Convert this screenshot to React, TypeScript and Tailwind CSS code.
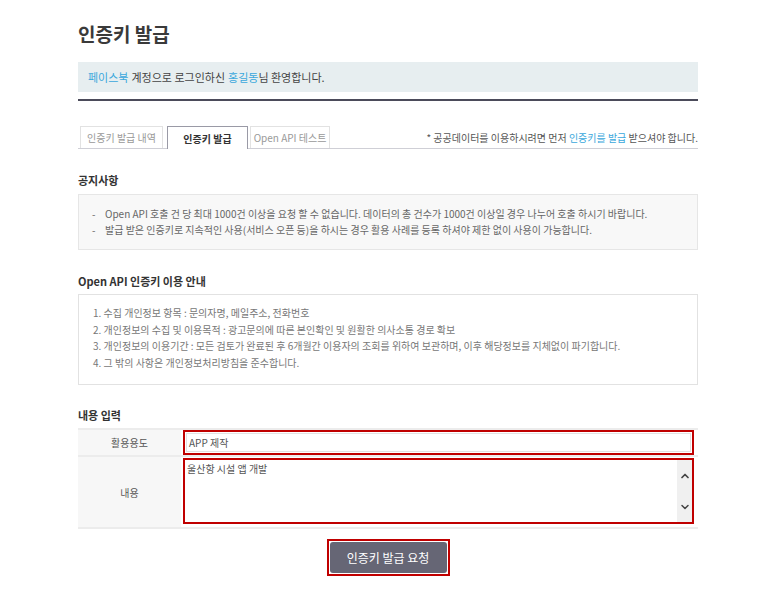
import { ChevronUp, ChevronDown } from 'lucide-react';

const font = { fontFamily: '"Noto Sans CJK KR", "Noto Sans", sans-serif' };

const notices = [
  'Open API 호출 건 당 최대 1000건 이상을 요청 할 수 없습니다. 데이터의 총 건수가 1000건 이상일 경우 나누어 호출 하시기 바랍니다.',
  '발급 받은 인증키로 지속적인 사용(서비스 오픈 등)을 하시는 경우 활용 사례를 등록 하셔야 제한 없이 사용이 가능합니다.',
];

const guides = [
  '1. 수집 개인정보 항목 : 문의자명, 메일주소, 전화번호',
  '2. 개인정보의 수집 및 이용목적 : 광고문의에 따른 본인확인 및 원활한 의사소통 경로 확보',
  '3. 개인정보의 이용기간 : 모든 검토가 완료된 후 6개월간 이용자의 조회를 위하여 보관하며, 이후 해당정보를 지체없이 파기합니다.',
  '4. 그 밖의 사항은 개인정보처리방침을 준수합니다.',
];

const App = () => {
  return (
    <div className="w-[780px] h-[600px] bg-white" style={font}>
      <div className="ml-[78px] w-[620px] pt-[20px]">
        <h1 className="text-[19px] leading-[28px] font-bold text-[#3a3a3a]">인증키 발급</h1>

        <div className="mt-[14px] h-[30px] bg-[#e7eef0] px-[10px] flex items-center text-[11px] text-[#444]">
          <span className="text-[#3aa8dc]">페이스북</span>
          <span className="ml-[3px]">계정으로 로그인하신</span>
          <span className="ml-[3px] text-[#3aa8dc]">홍길동</span>
          <span>님 환영합니다.</span>
        </div>
        <div className="mt-[7px] h-[2px] bg-[#4b4b5a]" />

        {/* tabs */}
        <div className="mt-[25px] flex items-end border-b border-[#cfcfd6] h-[23px]">
          <div className="ml-[2px] h-[22px] w-[83px] border border-b-0 border-[#e2e2e2] flex items-center justify-center text-[10px] text-[#999]">
            인증키 발급 내역
          </div>
          <div className="ml-[4px] h-[23px] w-[81px] border border-b-0 border-[#9a9aa6] bg-white -mb-px flex items-center justify-center text-[10px] font-bold text-[#333]">
            인증키 발급
          </div>
          <div className="ml-[2px] h-[22px] w-[80px] border border-b-0 border-[#e2e2e2] flex items-center justify-center text-[10px] text-[#999]">
            Open API 테스트
          </div>
          <div className="ml-auto self-center text-[10px] text-[#555]">
            * 공공데이터를 이용하시려면 먼저 <span className="text-[#3aa8dc]">인증키를 발급</span> 받으셔야 합니다.
          </div>
        </div>

        <h2 className="mt-[23px] text-[11px] leading-[16px] font-bold text-[#333]">공지사항</h2>
        <div className="mt-[6px] h-[56px] bg-[#f8f8f8] border border-[#e6e6e6] pl-[13px] pt-[11px] text-[10px] leading-[16px] text-[#666]">
          {notices.map(n => (
            <div key={n} className="flex">
              <span className="w-[13px]">-</span>
              <span>{n}</span>
            </div>
          ))}
        </div>

        <h2 className="mt-[23px] text-[11px] leading-[16px] font-bold text-[#333]">Open API 인증키 이용 안내</h2>
        <div className="mt-[5px] h-[91px] bg-white border border-[#e2e2e2] pl-[14px] pt-[10px] text-[10px] leading-[16.5px] text-[#777]">
          {guides.map(g => (
            <div key={g}>{g}</div>
          ))}
        </div>

        <h2 className="mt-[22px] text-[11px] leading-[16px] font-bold text-[#333]">내용 입력</h2>
        <div className="mt-[5px] border-t-2 border-b-2 border-[#ececec]">
          <div className="flex h-[27px] border-b-2 border-[#ececec]">
            <div className="w-[103px] bg-[#f7f7f7] flex items-center justify-center text-[10px] text-[#555]">활용용도</div>
            <div className="flex-1 bg-white pl-[2px] pr-[4px]">
              <div className="w-full h-[25px] border-2 border-[#c00000] p-px">
                <div className="h-full border border-[#e2e2e2] px-[2px] flex items-center text-[10px] text-[#555]">APP 제작</div>
              </div>
            </div>
          </div>
          <div className="flex h-[70px]">
            <div className="w-[103px] bg-[#f7f7f7] flex items-center justify-center text-[10px] text-[#555]">내용</div>
            <div className="flex-1 bg-white pl-[2px] pr-[4px] pt-[1px]">
              <div className="w-full h-[66px] border-2 border-[#c00000] flex">
                <div className="flex-1 p-[2px] text-[10px] leading-[14px] text-[#555]">울산항 시설 앱 개발</div>
                <div className="w-[15px] bg-[#f0f0f0] flex flex-col items-center justify-between pt-[10px] pb-[9px] text-[#444]">
                  <ChevronUp size={12} strokeWidth={3.5} />
                  <ChevronDown size={12} strokeWidth={3} />
                </div>
              </div>
            </div>
          </div>
        </div>

        <div className="mt-[10px] flex justify-center">
          <div className="border-2 border-[#c00000] p-px">
            <button className="w-[117px] h-[31px] rounded-[3px] bg-[#666675] text-white text-[12px]">
              인증키 발급 요청
            </button>
          </div>
        </div>
      </div>
    </div>
  );
};

export default App;
